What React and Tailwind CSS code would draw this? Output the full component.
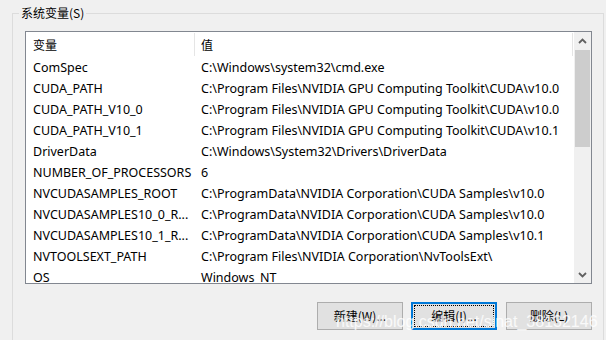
const rows = [
  ["ComSpec", "C:\\Windows\\system32\\cmd.exe"],
  ["CUDA_PATH", "C:\\Program Files\\NVIDIA GPU Computing Toolkit\\CUDA\\v10.0"],
  ["CUDA_PATH_V10_0", "C:\\Program Files\\NVIDIA GPU Computing Toolkit\\CUDA\\v10.0"],
  ["CUDA_PATH_V10_1", "C:\\Program Files\\NVIDIA GPU Computing Toolkit\\CUDA\\v10.1"],
  ["DriverData", "C:\\Windows\\System32\\Drivers\\DriverData"],
  ["NUMBER_OF_PROCESSORS", "6"],
  ["NVCUDASAMPLES_ROOT", "C:\\ProgramData\\NVIDIA Corporation\\CUDA Samples\\v10.0"],
  ["NVCUDASAMPLES10_0_R...", "C:\\ProgramData\\NVIDIA Corporation\\CUDA Samples\\v10.0"],
  ["NVCUDASAMPLES10_1_R...", "C:\\ProgramData\\NVIDIA Corporation\\CUDA Samples\\v10.1"],
  ["NVTOOLSEXT_PATH", "C:\\Program Files\\NVIDIA Corporation\\NvToolsExt\\"],
  ["OS", "Windows_NT"],
];

function Chevron({ up }) {
  return (
    <svg width="9" height="6" viewBox="0 0 9 6">
      <path
        d={up ? "M1 5 L4.5 1.5 L8 5" : "M1 1 L4.5 4.5 L8 1"}
        fill="none"
        stroke="#606060"
        strokeWidth="1.8"
      />
    </svg>
  );
}

export default function App() {
  return (
    <div className="relative w-[606px] h-[340px] overflow-hidden bg-[#f0f0f0] pt-[13px] pl-[12px] font-['Noto_Sans','Noto_Sans_CJK_SC',sans-serif] text-[12px] text-black">
      <div className="relative w-[592px] h-[400px] border-l border-t border-r border-[#dcdcdc] pl-[12px] pt-[17px]">
        <div className="absolute left-[6px] top-[-8px] px-[2px] bg-[#f0f0f0] leading-[14px] font-['Noto_Sans_CJK_SC',sans-serif]">
          系统变量(S)
        </div>
        <div className="w-[567px] h-[253px] border border-[#828790] bg-white flex">
          <div className="w-[548px] flex flex-col overflow-hidden">
            <div className="h-[25px] flex items-center shrink-0 font-['Noto_Sans_CJK_SC',sans-serif]">
              <div className="w-[168px] pl-[7px] leading-[14px]">变量</div>
              <div className="w-px h-[23px] bg-[#e5e5e5]" />
              <div className="w-[377px] pl-[6px] leading-[14px]">值</div>
              <div className="w-px h-[23px] bg-[#e5e5e5]" />
            </div>
            {rows.map(([k, v]) => (
              <div key={k} className="h-[21px] shrink-0 flex items-center whitespace-nowrap leading-[14px] text-[12.5px]">
                <div className="w-[169px] shrink-0 pl-[7px]">{k}</div>
                <div className="pl-[6px]">{v}</div>
              </div>
            ))}
          </div>
          <div className="w-[17px] ml-auto bg-[#f0f0f0] flex flex-col">
            <div className="h-[17px] flex items-center justify-center">
              <Chevron up />
            </div>
            <div className="mt-[1px] h-[97px] mx-[1px] bg-[#cdcdcd]" />
            <div className="flex-1" />
            <div className="h-[17px] flex items-center justify-center">
              <Chevron />
            </div>
          </div>
        </div>
        <div className="w-[567px] mt-[18px] flex justify-end font-['Noto_Sans_CJK_SC',sans-serif]">
          <div className="w-[86px] h-[28px] border border-[#adadad] bg-[#e1e1e1] flex items-center justify-center">
            新建(W)...
          </div>
          <div className="relative ml-[8px] w-[86px] h-[28px] border-2 border-[#0078d7] bg-[#e1e1e1] flex items-center justify-center">
            <div className="absolute inset-[1px] border border-dotted border-black" />
            编辑(I)...
          </div>
          <div className="ml-[9px] w-[86px] h-[28px] border border-[#adadad] bg-[#e1e1e1] flex items-center justify-center">
            删除(L)
          </div>
        </div>
      </div>
      <div className="absolute left-[336px] top-[314px] text-[16px] leading-none whitespace-nowrap text-white/80 font-['Liberation_Sans',sans-serif]">
        https://blog.csdn.net/sinat_38132146
      </div>
    </div>
  );
}
